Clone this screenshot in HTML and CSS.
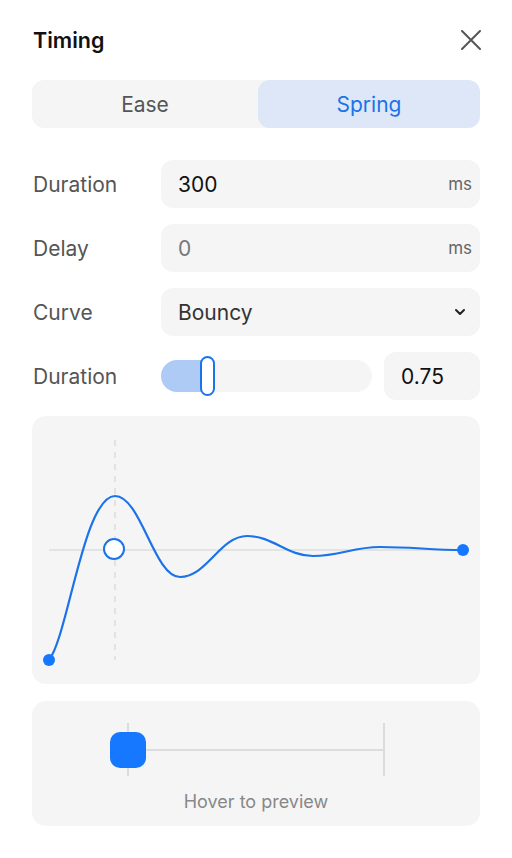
FILE: index.html
```html
<!DOCTYPE html>
<html lang="en">
<head>
  <meta charset="UTF-8" />
  <meta name="viewport" content="width=device-width, initial-scale=1.0" />
  <title>Timing</title>
  <link rel="stylesheet" href="styles.css">
</head>
<body>
  <div class="panel">
    <header class="panel-head">
      <h1>Timing</h1>
      <button class="close-btn" aria-label="Close">
        <svg width="20" height="20" viewBox="0 0 20 20">
          <path d="M1 1 L19 19 M19 1 L1 19" stroke="#555" stroke-width="2" stroke-linecap="round" />
        </svg>
      </button>
    </header>

    <div class="segmented">
      <div class="seg">Ease</div>
      <div class="seg active">Spring</div>
    </div>

    <div class="fields">
      <div class="row">
        <label>Duration</label>
        <div class="field">
          <span class="value">300</span>
          <span class="unit">ms</span>
        </div>
      </div>
      <div class="row">
        <label>Delay</label>
        <div class="field">
          <span class="value muted">0</span>
          <span class="unit">ms</span>
        </div>
      </div>
      <div class="row">
        <label>Curve</label>
        <div class="field">
          <span class="value soft">Bouncy</span>
          <svg class="chevron" width="12" height="8" viewBox="0 0 12 8">
            <path d="M2 2 L6 6 L10 2" fill="none" stroke="#222" stroke-width="2" stroke-linecap="round" stroke-linejoin="round" />
          </svg>
        </div>
      </div>
      <div class="row">
        <label>Duration</label>
        <div class="slider">
          <div class="slider-fill" style="width: 47px"></div>
          <div class="slider-thumb" style="left: 39px"></div>
        </div>
        <div class="field small">
          <span class="value">0.75</span>
        </div>
      </div>
    </div>

    <div class="chart">
      <svg width="448" height="268" viewBox="0 0 448 268">
        <line x1="17" y1="134" x2="431" y2="134" stroke="#dcdcdc" stroke-width="1.5" />
        <line x1="83" y1="24" x2="83" y2="244" stroke="#dcdcdc" stroke-width="1.5" stroke-dasharray="6 6" />
        <path d="M17 244 C36 220, 52 80, 83 80 C109 80, 122 161, 148 161 C175 161, 188 120, 215 120 C241 120, 255 140, 281 140 C308 140, 321 131, 348 131 C381 131, 398 134, 431 134"
              fill="none" stroke="#1a73e8" stroke-width="2.2" />
        <circle cx="17" cy="244" r="6" fill="#1677ff" />
        <circle cx="431" cy="134" r="6" fill="#1677ff" />
        <circle cx="82" cy="133" r="10" fill="#fff" stroke="#1a73e8" stroke-width="2" />
      </svg>
    </div>

    <div class="preview">
      <div class="track">
        <div class="tick"></div>
        <div class="track-line"></div>
        <div class="tick"></div>
        <div class="box"></div>
      </div>
      <p class="hint">Hover to preview</p>
    </div>
  </div>
</body>
</html>
```

FILE: styles.css
```css
body {
  margin: 0;
  font-family: 'Inter', 'Noto Sans', sans-serif;
  background-color: #fff;
  color: #111;
}
.panel {
  padding: 24px 32px;
}
.panel-head {
  display: flex;
  align-items: center;
  justify-content: space-between;
  height: 32px;
}
.panel-head h1 {
  margin: 0 0 0 1px;
  font-size: 21.5px;
  font-weight: 600;
  color: #111;
}
.close-btn {
  background: none;
  border: none;
  padding: 0;
  margin-right: -1px;
  width: 20px;
  height: 20px;
  cursor: pointer;
}
.segmented {
  margin-top: 24px;
  display: grid;
  grid-template-columns: 226px 1fr;
  height: 48px;
  background-color: #f5f5f5;
  border-radius: 12px;
}
.seg {
  display: flex;
  align-items: center;
  justify-content: center;
  font-size: 21px;
  color: #555;
  border-radius: 12px;
}
.seg.active {
  background-color: #dde7f7;
  color: #1a73e8;
}
.fields {
  margin-top: 32px;
  display: flex;
  flex-direction: column;
  gap: 16px;
}
.row {
  display: flex;
  align-items: center;
  height: 48px;
}
.row label {
  width: 128px;
  flex: none;
  padding-left: 1px;
  font-size: 21px;
  color: #555;
}
.field {
  flex: 1;
  height: 48px;
  display: flex;
  align-items: center;
  justify-content: space-between;
  padding: 0 8px 0 16px;
  background-color: #f5f5f5;
  border-radius: 12px;
  box-sizing: border-box;
}
.field.small {
  flex: none;
  width: 96px;
  margin-left: 12px;
}
.value {
  font-size: 21px;
  color: #111;
  padding-left: 1px;
}
.value.muted {
  color: #777;
}
.value.soft {
  color: #333;
}
.unit {
  font-size: 17px;
  color: #666;
}
.chevron {
  margin-right: 6px;
}
.slider {
  flex: 1;
  position: relative;
  height: 32px;
  background-color: #f5f5f5;
  border-radius: 16px;
}
.slider-fill {
  height: 32px;
  background-color: #aecbf5;
  border-radius: 16px 0 0 16px;
}
.slider-thumb {
  position: absolute;
  top: -4px;
  width: 11px;
  height: 36px;
  background: #fff;
  border: 2px solid #1a73e8;
  border-radius: 8px;
}
.chart {
  margin-top: 16px;
  height: 268px;
  background-color: #f5f5f5;
  border-radius: 14px;
}
.chart svg {
  display: block;
}
.preview {
  margin-top: 17px;
  height: 125px;
  box-sizing: border-box;
  padding-top: 22px;
  background-color: #f5f5f5;
  border-radius: 14px;
}
.track {
  position: relative;
  width: 258px;
  margin: 0 auto;
  height: 53px;
  display: flex;
  align-items: center;
}
.tick {
  width: 2px;
  height: 53px;
  background-color: #dcdcdc;
}
.track-line {
  flex: 1;
  height: 2px;
  background-color: #dcdcdc;
}
.box {
  position: absolute;
  left: -17px;
  top: 9px;
  width: 36px;
  height: 36px;
  background-color: #1677ff;
  border-radius: 10px;
}
.hint {
  margin: 16px 0 0;
  text-align: center;
  font-size: 18px;
  line-height: 20px;
  color: #888;
}
```
